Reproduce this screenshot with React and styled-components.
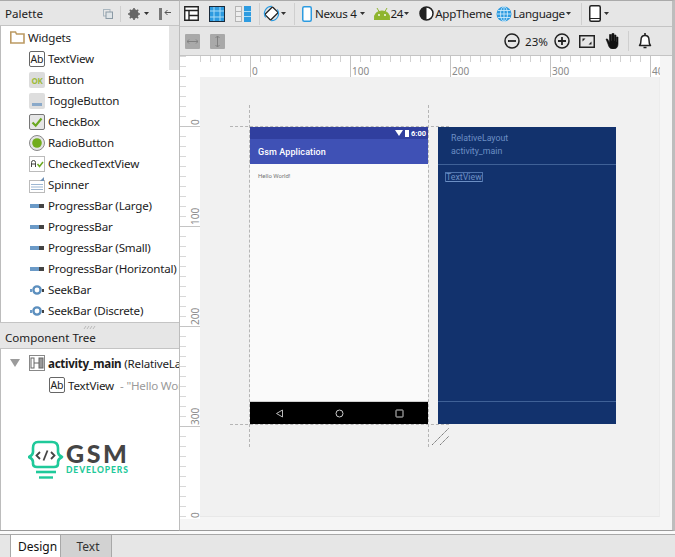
import React from "react";
import styled, { createGlobalStyle } from "styled-components";

const GlobalStyle = createGlobalStyle`
  html, body { margin: 0; padding: 0; background: #e6e6e6; }
  body { font-family: "Noto Sans", "Open Sans", sans-serif; font-size: 11.6px; color: #1c1c1c; }
  svg { flex: none; display: block; }
`;

const widgets = [
  ["TextView", "text"],
  ["Button", "ok"],
  ["ToggleButton", "toggle"],
  ["CheckBox", "check"],
  ["RadioButton", "radio"],
  ["CheckedTextView", "checked"],
  ["Spinner", "spinner"],
  ["ProgressBar (Large)", "progress"],
  ["ProgressBar", "progress"],
  ["ProgressBar (Small)", "progress"],
  ["ProgressBar (Horizontal)", "progress"],
  ["SeekBar", "seek"],
  ["SeekBar (Discrete)", "seek"],
];

const WidgetIcon = ({ kind }) => {
  switch (kind) {
    case "text":
      return (
        <svg width="16" height="16" viewBox="0 0 16 16">
          <rect x="0.5" y="0.5" width="15" height="15" rx="1.5" fill="#fff" stroke="#666" />
          <text x="8" y="12" textAnchor="middle" fontSize="10.5" fontFamily="Noto Sans" fill="#222">Ab</text>
        </svg>
      );
    case "ok":
      return (
        <svg width="16" height="16" viewBox="0 0 16 16">
          <rect x="0" y="0" width="16" height="16" rx="2" fill="#dcdcdc" />
          <text x="8" y="11.5" textAnchor="middle" fontSize="8" fontWeight="700" fontFamily="Noto Sans" fill="#9dbb3a">OK</text>
        </svg>
      );
    case "toggle":
      return (
        <svg width="16" height="16" viewBox="0 0 16 16">
          <rect x="0" y="0" width="16" height="16" rx="2" fill="#dedede" />
          <rect x="3" y="10" width="10" height="3" fill="#8aa9c9" />
        </svg>
      );
    case "check":
      return (
        <svg width="16" height="16" viewBox="0 0 16 16">
          <rect x="0.5" y="0.5" width="15" height="15" rx="1.5" fill="#e6e6e6" stroke="#777" />
          <path d="M3.5 8.5 L6.7 11.7 L12.5 4.5" fill="none" stroke="#6aa820" strokeWidth="2.2" />
        </svg>
      );
    case "radio":
      return (
        <svg width="16" height="16" viewBox="0 0 16 16">
          <circle cx="8" cy="8" r="7.5" fill="#e4e4e4" stroke="#888" />
          <circle cx="8" cy="8" r="4.8" fill="#71ac1c" />
        </svg>
      );
    case "checked":
      return (
        <svg width="16" height="16" viewBox="0 0 16 16">
          <rect x="0.5" y="0.5" width="15" height="15" fill="#fff" stroke="#bbb" />
          <path d="M2.5 11 V6.5 Q2.5 4.5 4.5 4.5 Q6.5 4.5 6.5 6.5 V11 M2.5 8 H6.5" fill="none" stroke="#444" />
          <path d="M8.5 8 L10.5 10.5 L14 6" fill="none" stroke="#6aa820" strokeWidth="1.5" />
        </svg>
      );
    case "spinner":
      return (
        <svg width="16" height="16" viewBox="0 0 16 16">
          <rect x="0.5" y="3.5" width="15" height="12" fill="#fff" stroke="#bbb" />
          <path d="M2 7.5 H14 M2 10 H14 M2 12.5 H14" stroke="#9db7d3" />
          <path d="M15 0 V4 H11 Z" fill="#6d8fb5" />
        </svg>
      );
    case "progress":
      return (
        <svg width="16" height="16" viewBox="0 0 16 16">
          <rect x="1" y="6" width="9" height="4" fill="#6b9ac7" />
          <rect x="10" y="6" width="5" height="4" fill="#444" />
        </svg>
      );
    default:
      return (
        <svg width="16" height="16" viewBox="0 0 16 16">
          <rect x="1" y="7" width="2" height="3" fill="#6b9ac7" />
          <circle cx="8" cy="8" r="3.6" fill="#fff" stroke="#5c8fbe" strokeWidth="2.4" />
          <rect x="13" y="7" width="2" height="3" fill="#444" />
        </svg>
      );
  }
};

const Caret = () => (
  <svg width="5" height="3" viewBox="0 0 5 3"><path d="M0 0 H5 L2.5 3 Z" fill="#333" /></svg>
);

const TopRulerArt = () => (
  <svg width="480" height="21" viewBox="0 0 480 21">
    {Array.from({ length: 48 }, (_, i) => {
      const x = i * 10 + 0.5;
      const major = i % 10 === 7;
      return <line key={i} x1={x} x2={x} y1="0" y2={major ? 21 : 6} stroke={major ? "#c4c4c4" : "#d2d2d2"} />;
    })}
    {[["0", 72], ["100", 172], ["200", 272], ["300", 372], ["40", 472]].map(([label, x]) => (
      <text key={label} x={x} y="19" fontSize="10" fontFamily="Noto Sans" fill="#8a8a8a">{label}</text>
    ))}
  </svg>
);

const SideRulerArt = () => (
  <svg width="20" height="463" viewBox="0 0 20 463">
    {Array.from({ length: 47 }, (_, i) => {
      const y = i * 10 + 0.5;
      const major = i % 10 === 7;
      return <line key={i} x1="0" x2={major ? 20 : 6} y1={y} y2={y} stroke={major ? "#c4c4c4" : "#d8d8d8"} />;
    })}
    {[["0", 69], ["100", 169], ["200", 269], ["300", 369], ["0", 462]].map(([label, y], i) => (
      <text key={i} x="0" y="0" fontSize="10" fontFamily="Noto Sans" fill="#8a8a8a" transform={`translate(19 ${y}) rotate(-90)`}>{label}</text>
    ))}
  </svg>
);

const LogoMark = () => (
  <svg width="36" height="40" viewBox="0 0 36 40">
    <path
      d="M10 2 H24 Q30 2 30 8 V12 Q30 15 34 17 Q30 19 30 22 V24 Q30 27 26 27 H9 Q5 27 5 24 V22 Q5 19 1 17 Q5 15 5 12 V8 Q5 2 10 2 Z"
      fill="none"
      stroke="#1fc99a"
      strokeWidth="2.6"
      strokeLinejoin="round"
    />
    <path d="M12 12 L8.5 15.5 L12 19 M23 12 L26.5 15.5 L23 19" fill="none" stroke="#444" strokeWidth="1.8" />
    <path d="M19.5 10.5 L15.5 20.5" fill="none" stroke="#444" strokeWidth="1.8" />
    <path d="M8 32 H28" stroke="#1fc99a" strokeWidth="2.6" />
    <path d="M11 37.5 H25" stroke="#1fc99a" strokeWidth="2.4" />
  </svg>
);

const Frame = styled.div`
  width: 675px;
  height: 557px;
  display: grid;
  grid-template-columns: 179px 1fr;
  grid-template-rows: 531px 26px;
  overflow: hidden;
  background: #e6e6e6;
`;

const Sidebar = styled.aside`
  display: flex;
  flex-direction: column;
  min-height: 0;
  border-top: 1px solid #aaa;
  border-bottom: 1px solid #9a9a9a;
`;

const PanelHeader = styled.div`
  height: 25px;
  flex: none;
  display: flex;
  align-items: center;
  padding: 1px 5px 0;
  background: #e6e6e6;
  border-bottom: 1px solid #c4c4c4;
  box-sizing: border-box;
`;

const HeaderTools = styled.div`
  margin-left: auto;
  display: flex;
  align-items: center;
  gap: 4px;
  padding-right: 2px;
`;

const Divider = styled.span`
  display: block;
  flex: none;
  width: 1px;
  height: ${(p) => p.$h || 20}px;
  background: #cfcfcf;
  margin: 0 ${(p) => p.$m ?? 4}px;
`;

const WidgetPane = styled.div`
  height: 296px;
  flex: none;
  position: relative;
  overflow: hidden;
  padding-top: 1px;
  background: #fff;
  border-left: 1px solid #bcbcbc;
  box-sizing: border-box;
  letter-spacing: -0.2px;
`;

const Thumb = styled.div`
  position: absolute;
  top: 0;
  right: 0;
  width: 10px;
  height: 44px;
  background: #e2e2e2;
`;

const WidgetRow = styled.div`
  height: 21px;
  display: flex;
  align-items: center;
  gap: 3px;
  padding-left: ${(p) => p.$indent}px;
  white-space: nowrap;
`;

const Grip = styled.div`
  height: 9px;
  flex: none;
  display: flex;
  align-items: center;
  justify-content: center;
  background: #e6e6e6;
  border-top: 1px solid #c4c4c4;
  box-sizing: border-box;
`;

const TreeHeader = styled(PanelHeader)`
  height: 18px;
  padding-top: 0;
  align-items: flex-start;
  line-height: 14px;
`;

const TreePane = styled.div`
  flex: 1;
  background: #fff;
  border-left: 1px solid #bcbcbc;
  box-sizing: border-box;
  padding-top: 3px;
  overflow: hidden;
`;

const TreeRow = styled.div`
  height: 22px;
  display: flex;
  align-items: center;
  gap: 3px;
  padding-left: ${(p) => p.$indent}px;
  white-space: nowrap;
  overflow: hidden;
  letter-spacing: -0.2px;
`;

const Arrow = styled.span`
  flex: none;
  width: 0;
  height: 0;
  border-left: 5px solid transparent;
  border-right: 5px solid transparent;
  border-top: 8px solid #9b9b9b;
  margin-right: 6px;
`;

const Strong = styled.b`
  font-weight: 700;
  letter-spacing: -0.3px;
  margin-right: 3px;
`;

const Muted = styled.span`
  color: #9a9a9a;
  margin-left: 3px;
`;

const Logo = styled.div`
  display: flex;
  align-items: flex-start;
  gap: 2px;
  margin: 44px 0 0 27px;
`;

const LogoWords = styled.div`
  display: flex;
  flex-direction: column;
  margin-top: 1px;
`;

const LogoTitle = styled.span`
  font-family: "Lato", sans-serif;
  font-weight: 900;
  font-size: 25px;
  line-height: 24px;
  letter-spacing: 2.6px;
  color: #454545;
`;

const LogoSub = styled.span`
  font-family: "Lato", sans-serif;
  font-weight: 900;
  font-size: 8.5px;
  line-height: 10px;
  letter-spacing: 0.9px;
  color: #1fc99a;
`;

const Main = styled.main`
  display: flex;
  flex-direction: column;
  min-width: 0;
  border-top: 1px solid #aaa;
  border-left: 1px solid #bdbdbd;
  border-bottom: 1px solid #9a9a9a;
  border-right: 3px solid #bdbdbd;
`;

const Toolbar = styled.div`
  height: 25px;
  flex: none;
  display: flex;
  align-items: center;
  padding-left: 4px;
  background: #e6e6e6;
  border-bottom: 1px solid #c4c4c4;
  letter-spacing: -0.3px;
`;

const ToolGroup = styled.div`
  display: flex;
  align-items: center;
  gap: ${(p) => p.$gap ?? 2}px;
  margin-left: ${(p) => p.$before ?? 0}px;
  margin-right: ${(p) => p.$after ?? 0}px;
  white-space: nowrap;
`;

const ZoomBar = styled.div`
  height: 28px;
  flex: none;
  display: flex;
  align-items: center;
  padding: 0 20px 0 5px;
  background: #e6e6e6;
  border-bottom: 1px solid #c4c4c4;
`;

const GreyButton = styled.span`
  width: 15px;
  height: 15px;
  display: flex;
  align-items: center;
  justify-content: center;
  background: #a9a9a9;
  border-radius: 1px;
  margin-right: ${(p) => p.$after ?? 0}px;
`;

const ZoomTools = styled.div`
  margin-left: auto;
  display: flex;
  align-items: center;
  gap: 9px;
`;

const ZoomValue = styled.span`
  margin: 0 -3px 0 -4px;
`;

const Surface = styled.div`
  flex: 1;
  position: relative;
  overflow: hidden;
  background: #f5f5f5;
  display: grid;
  grid-template-columns: 20px 460px 1fr;
  grid-template-rows: 21px 440px 1fr;
`;

const RulerCorner = styled.div`
  background: #fff;
`;

const TopRuler = styled.div`
  background: #fff;
  grid-column: 2 / span 2;
  width: 480px;
  overflow: hidden;
  margin-left: -20px;
`;

const SideRuler = styled.div`
  background: #fff;
  overflow: hidden;
  height: 463px;
  margin-top: -21px;
  grid-row: 2 / span 2;
  grid-column: 1;
`;

const Canvas = styled.div`
  grid-column: 2;
  grid-row: 2;
  background: #f1f1f1;
  border-right: 1px solid #ececec;
  border-bottom: 1px solid #e8e8e8;
`;

const Screen = styled.div`
  position: absolute;
  left: 70px;
  top: 71px;
  width: 178px;
  height: 297px;
  display: flex;
  flex-direction: column;
  background: #fafafa;
  overflow: hidden;
`;

const StatusBar = styled.div`
  height: 12px;
  flex: none;
  background: #303f9f;
  color: #fff;
  display: flex;
  align-items: center;
  justify-content: flex-end;
  gap: 2px;
  padding-right: 2px;
  font-family: "Roboto", sans-serif;
  font-size: 7.5px;
  font-weight: 700;
`;

const AppBar = styled.div`
  height: 25px;
  flex: none;
  box-sizing: border-box;
  background: #3f51b5;
  color: #fff;
  display: flex;
  align-items: center;
  padding-left: 8px;
  font-family: "Roboto", sans-serif;
  font-size: 9px;
  font-weight: 500;
  letter-spacing: 0.1px;
`;

const Content = styled.div`
  flex: 1;
  padding: 8px 8px;
  font-family: "Roboto", sans-serif;
  font-size: 6px;
  color: #757575;
  border-bottom: 1px solid #cfcfcf;
`;

const NavBar = styled.div`
  height: 22px;
  flex: none;
  background: #000;
  display: flex;
  align-items: center;
  gap: 51px;
  padding-left: 25px;
`;

const Blueprint = styled.div`
  position: absolute;
  left: 258px;
  top: 71px;
  width: 178px;
  height: 297px;
  background: #12326d;
  color: #6c8fc4;
  font-family: "Roboto", sans-serif;
  font-size: 8.8px;
  line-height: 13px;
`;

const BlueHead = styled.div`
  height: 38px;
  box-sizing: border-box;
  padding: 5px 13px;
  border-bottom: 1px solid #3f6197;
`;

const BlueBody = styled.div`
  height: 237px;
  box-sizing: border-box;
  padding: 6px 7px 0;
  border-bottom: 1px solid #3f6197;
`;

const BlueLabel = styled.span`
  display: inline-block;
  line-height: 8px;
  border: 1px solid #4f74ad;
  text-decoration: underline;
`;

const Guide = styled.div`
  position: absolute;
  left: ${(p) => p.$x}px;
  top: ${(p) => p.$y}px;
  width: ${(p) => (p.$vertical ? 0 : p.$len + "px")};
  height: ${(p) => (p.$vertical ? p.$len + "px" : 0)};
  ${(p) => (p.$vertical ? "border-left" : "border-top")}: 1px dashed #b5b5b5;
`;

const ResizeMark = styled.svg`
  position: absolute;
  left: 252px;
  top: 372px;
`;

const TabArea = styled.div`
  grid-column: 1 / -1;
  padding-top: 3px;
  background: #fafafa;
  display: flex;
`;

const TabStrip = styled.div`
  flex: 1;
  display: flex;
  padding-left: 10px;
  background: #e6e6e6;
  border-top: 1px solid #a8a8a8;
`;

const Tab = styled.div`
  width: ${(p) => p.$w}px;
  box-sizing: border-box;
  padding-left: 4px;
  display: flex;
  align-items: center;
  justify-content: center;
  border-left: 1px solid #a8a8a8;
  border-right: 1px solid #a8a8a8;
  background: ${(p) => (p.$active ? "#fff" : "#d2d2d2")};
  margin-left: ${(p) => (p.$active ? 0 : -1)}px;
  font-size: 12px;
  color: ${(p) => (p.$active ? "#111" : "#333")};
`;

export default function App() {
  return (
    <>
      <GlobalStyle />
      <Frame>
        <Sidebar>
          <PanelHeader>
            Palette
            <HeaderTools>
              <svg width="10" height="10" viewBox="0 0 10 10">
                <rect x="0.5" y="0.5" width="6.5" height="6.5" fill="none" stroke="#a9b6bf" />
                <rect x="3" y="3" width="6.5" height="6.5" fill="#dfe4e7" stroke="#8b9aa5" />
              </svg>
              <Divider $h={16} $m={3} />
              <svg width="12" height="12" viewBox="0 0 12 12">
                <circle cx="6" cy="6" r="3.4" fill="none" stroke="#666" strokeWidth="2.6" />
                <path d="M6 0 V12 M0 6 H12 M1.8 1.8 L10.2 10.2 M10.2 1.8 L1.8 10.2" stroke="#666" strokeWidth="1.6" />
              </svg>
              <Caret />
              <svg width="13" height="12" viewBox="0 0 13 12" style={{ marginLeft: 6 }}>
                <rect x="0" y="0" width="3" height="12" fill="#777" />
                <path d="M12 4.5 H6 M8.5 2 L6 4.5 L8.5 7" fill="none" stroke="#555" />
              </svg>
            </HeaderTools>
          </PanelHeader>
          <WidgetPane>
            <Thumb />
            <WidgetRow $indent={9}>
              <svg width="15" height="13" viewBox="0 0 15 13">
                <path d="M0.8 2 V12 H14 V3 H6.5 L5.5 1 H0.8 Z" fill="#fff" stroke="#bc9a63" strokeWidth="1.6" />
              </svg>
              Widgets
            </WidgetRow>
            {widgets.map(([name, kind]) => (
              <WidgetRow key={name} $indent={28}>
                <WidgetIcon kind={kind} />
                {name}
              </WidgetRow>
            ))}
          </WidgetPane>
          <Grip>
            <svg width="14" height="5" viewBox="0 0 14 5">
              <path d="M1 4 L3 1 M4 4 L6 1 M7 4 L9 1 M10 4 L12 1" stroke="#b9b9b9" />
            </svg>
          </Grip>
          <TreeHeader>Component Tree</TreeHeader>
          <TreePane>
            <TreeRow $indent={9}>
              <Arrow />
              <svg width="16" height="16" viewBox="0 0 16 16">
                <rect x="0.5" y="0.5" width="15" height="15" fill="#fff" stroke="#888" />
                <rect x="2" y="3" width="3" height="10" fill="#fff" stroke="#666" />
                <rect x="10" y="3" width="4" height="10" fill="#999" stroke="#666" />
                <path d="M5 8 H10" stroke="#666" />
              </svg>
              <span>
                <Strong>activity_main</Strong>(RelativeLayout)
              </span>
            </TreeRow>
            <TreeRow $indent={48}>
              <WidgetIcon kind="text" />
              TextView<Muted>- "Hello World!"</Muted>
            </TreeRow>
            <Logo>
              <LogoMark />
              <LogoWords>
                <LogoTitle>GSM</LogoTitle>
                <LogoSub>DEVELOPERS</LogoSub>
              </LogoWords>
            </Logo>
          </TreePane>
        </Sidebar>
        <Main>
          <Toolbar>
            <ToolGroup $gap={10} $after={8}>
              <svg width="15" height="15" viewBox="0 0 15 15">
                <path d="M0.75 0.75 H14.25 V14.25 H0.75 Z M0.75 4.5 H14.25 M5 4.5 V14.25 M5 9.5 H14.25" fill="#fff" stroke="#222" strokeWidth="1.4" />
              </svg>
              <svg width="16" height="16" viewBox="0 0 16 16">
                <rect x="0.5" y="0.5" width="15" height="15" fill="#2d9be0" stroke="#1a2a3a" />
                <path d="M5 1 V15 M11 1 V15 M1 5 H15 M1 11 H15" stroke="#a8dcf7" />
              </svg>
              <svg width="16" height="16" viewBox="0 0 16 16">
                <rect x="0.5" y="0.5" width="6" height="15" fill="#eee" stroke="#b5b5b5" />
                <path d="M1 5.5 H6 M1 10.5 H6" stroke="#b5b5b5" />
                <rect x="9" y="0" width="7" height="16" fill="#2d9be0" />
                <path d="M9 5.5 H16 M9 10.5 H16" stroke="#a8dcf7" />
              </svg>
            </ToolGroup>
            <Divider $h={22} $m={0} />
            <ToolGroup $gap={1} $before={3} $after={8}>
              <svg width="17" height="17" viewBox="0 0 19 19">
                <rect x="5" y="3.5" width="9" height="12" rx="1" transform="rotate(45 9.5 9.5)" fill="#fff" stroke="#222" strokeWidth="1.4" />
                <path d="M3 14 A8 8 0 0 1 10 1.5 M16 5 A8 8 0 0 1 9 17.5" fill="none" stroke="#2d9be0" strokeWidth="1.3" />
              </svg>
              <Caret />
            </ToolGroup>
            <Divider $h={22} $m={0} />
            <ToolGroup $gap={3} $before={7} $after={9}>
              <svg width="10" height="16" viewBox="0 0 10 16">
                <rect x="0.75" y="0.75" width="8.5" height="14.5" rx="1.5" fill="#fff" stroke="#2d9be0" strokeWidth="1.5" />
              </svg>
              Nexus 4
              <Caret />
            </ToolGroup>
            <ToolGroup $gap={1} $after={10}>
              <svg width="16" height="12" viewBox="0 0 16 12">
                <path d="M0 12 Q0 3 8 3 Q16 3 16 12 Z M3 0 L5 3.5 M13 0 L11 3.5" fill="#8fb52f" stroke="#8fb52f" />
                <circle cx="5" cy="7" r="0.9" fill="#fff" />
                <circle cx="11" cy="7" r="0.9" fill="#fff" />
              </svg>
              24
              <Caret />
            </ToolGroup>
            <ToolGroup $gap={1} $after={4}>
              <svg width="15" height="15" viewBox="0 0 15 15">
                <circle cx="7.5" cy="7.5" r="6.5" fill="#fff" stroke="#222" strokeWidth="1.5" />
                <path d="M7.5 1 A6.5 6.5 0 0 0 7.5 14 Z" fill="#222" />
              </svg>
              AppTheme
            </ToolGroup>
            <ToolGroup $gap={1} $after={10}>
              <svg width="16" height="16" viewBox="0 0 16 16">
                <circle cx="8" cy="8" r="7.5" fill="#2d9be0" />
                <path d="M1 8 H15 M2 4.5 H14 M2 11.5 H14 M8 .5 V15.5" stroke="#cdeafb" strokeWidth="0.9" />
                <ellipse cx="8" cy="8" rx="3.5" ry="7.5" fill="none" stroke="#cdeafb" strokeWidth="0.9" />
              </svg>
              Language
              <Caret />
            </ToolGroup>
            <Divider $h={22} $m={0} />
            <ToolGroup $gap={3} $before={7}>
              <svg width="12" height="17" viewBox="0 0 12 17">
                <rect x="0.75" y="0.75" width="10.5" height="15.5" rx="1.5" fill="#fff" stroke="#222" strokeWidth="1.5" />
                <path d="M1 13.5 H11" stroke="#222" />
              </svg>
              <Caret />
            </ToolGroup>
          </Toolbar>
          <ZoomBar>
            <GreyButton $after={10}>
              <svg width="11" height="5" viewBox="0 0 11 5"><path d="M0 2.5 H11 M2 .5 L0 2.5 L2 4.5 M9 .5 L11 2.5 L9 4.5" fill="none" stroke="#808080" /></svg>
            </GreyButton>
            <GreyButton>
              <svg width="5" height="11" viewBox="0 0 5 11"><path d="M2.5 0 V11 M.5 2 L2.5 0 L4.5 2 M.5 9 L2.5 11 L4.5 9" fill="none" stroke="#808080" /></svg>
            </GreyButton>
            <ZoomTools>
              <svg width="16" height="16" viewBox="0 0 16 16">
                <circle cx="8" cy="8" r="7" fill="none" stroke="#222" strokeWidth="1.5" />
                <path d="M4 8 H12" stroke="#222" strokeWidth="1.8" />
              </svg>
              <ZoomValue>23%</ZoomValue>
              <svg width="16" height="16" viewBox="0 0 16 16">
                <circle cx="8" cy="8" r="7" fill="none" stroke="#222" strokeWidth="1.5" />
                <path d="M4 8 H12 M8 4 V12" stroke="#222" strokeWidth="1.8" />
              </svg>
              <svg width="16" height="13" viewBox="0 0 16 13">
                <rect x="0.75" y="0.75" width="14.5" height="11.5" fill="none" stroke="#222" strokeWidth="1.5" />
                <path d="M3.5 6.5 V3.5 H6.5 Z M12.5 6.5 V9.5 H9.5 Z" fill="#222" />
              </svg>
              <svg width="15" height="16" viewBox="0 0 15 16">
                <path d="M2 6 L4 11 Q5 16 9 16 Q14 16 14 11 V4 H12.5 V9 H12 V2 H10.5 V8 H10 V0.5 H8 V8 H7.5 V1.5 H5.5 V9.5 L3.5 6 Z" fill="#111" stroke="#111" strokeWidth="0.6" />
              </svg>
              <Divider $h={20} $m={0} />
              <svg width="14" height="16" viewBox="0 0 13 16">
                <path d="M1 12.5 Q2.5 11 2.5 7 Q2.5 2.5 6.5 2.5 Q10.5 2.5 10.5 7 Q10.5 11 12 12.5 Z" fill="#fff" stroke="#222" strokeWidth="1.5" strokeLinejoin="round" />
                <path d="M6.5 0 V2 M5 14.5 H8" stroke="#222" strokeWidth="1.6" />
              </svg>
            </ZoomTools>
          </ZoomBar>
          <Surface>
            <RulerCorner />
            <TopRuler><TopRulerArt /></TopRuler>
            <SideRuler><SideRulerArt /></SideRuler>
            <Canvas />
            <Guide $x={50} $y={70} $len={219} />
            <Guide $x={50} $y={368} $len={219} />
            <Guide $vertical $x={69} $y={49} $len={342} />
            <Guide $vertical $x={248} $y={49} $len={342} />
            <Screen>
              <StatusBar>
                <svg width="8" height="6" viewBox="0 0 8 6"><path d="M0 0 H8 L4 6 Z" fill="#fff" /></svg>
                <svg width="4" height="7" viewBox="0 0 4 7"><rect width="4" height="7" fill="#fff" /></svg>
                6:00
              </StatusBar>
              <AppBar>Gsm Application</AppBar>
              <Content>Hello World!</Content>
              <NavBar>
                <svg width="9" height="9" viewBox="0 0 9 9"><path d="M7.5 1 V8 L1.5 4.5 Z" fill="none" stroke="#bbb" /></svg>
                <svg width="9" height="9" viewBox="0 0 9 9"><circle cx="4.5" cy="4.5" r="3.5" fill="none" stroke="#ccc" /></svg>
                <svg width="9" height="9" viewBox="0 0 9 9"><rect x="1" y="1" width="7" height="7" rx="0.5" fill="none" stroke="#ccc" /></svg>
              </NavBar>
            </Screen>
            <Blueprint>
              <BlueHead>RelativeLayout<br />activity_main</BlueHead>
              <BlueBody><BlueLabel>TextView</BlueLabel></BlueBody>
            </Blueprint>
            <ResizeMark width="18" height="18" viewBox="0 0 18 18">
              <path d="M0 17 L17 0 M8 17 L17 8" stroke="#777" strokeDasharray="1.5 0.5" />
            </ResizeMark>
          </Surface>
        </Main>
        <TabArea>
          <TabStrip>
            <Tab $active $w={51}>Design</Tab>
            <Tab $w={52}>Text</Tab>
          </TabStrip>
        </TabArea>
      </Frame>
    </>
  );
}
